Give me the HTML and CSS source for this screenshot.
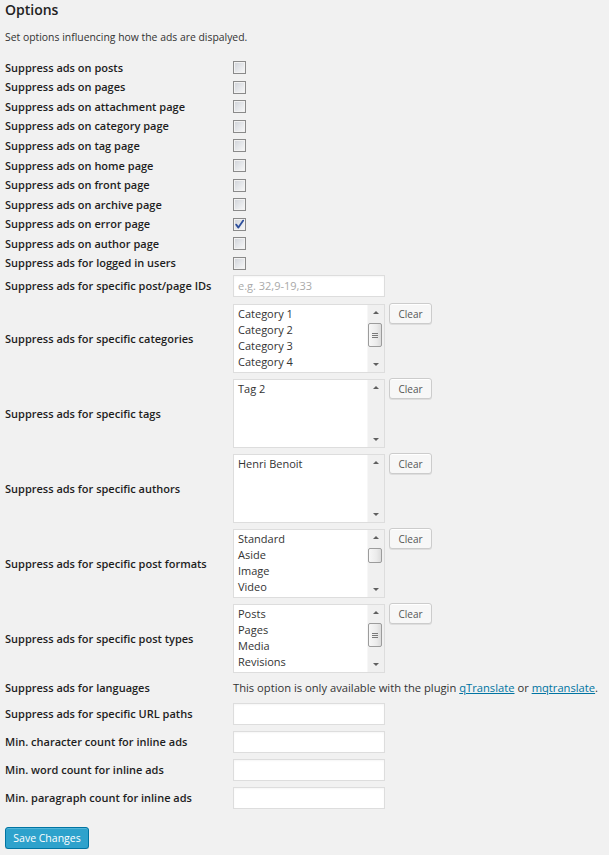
FILE: index.html
```html
<!DOCTYPE html>
<html>
<head>
<meta charset="utf-8">
<link rel="stylesheet" href="styles.css">
</head>
<body>
<div class="wrap">
  <h3 class="title">Options</h3>
  <p class="desc">Set options influencing how the ads are dispalyed.</p>

  <div class="form">
    <div class="row check"><div class="label">Suppress ads on posts</div><div class="field"><span class="cb"></span></div></div>
    <div class="row check"><div class="label">Suppress ads on pages</div><div class="field"><span class="cb"></span></div></div>
    <div class="row check"><div class="label">Suppress ads on attachment page</div><div class="field"><span class="cb"></span></div></div>
    <div class="row check"><div class="label">Suppress ads on category page</div><div class="field"><span class="cb"></span></div></div>
    <div class="row check"><div class="label">Suppress ads on tag page</div><div class="field"><span class="cb"></span></div></div>
    <div class="row check"><div class="label">Suppress ads on home page</div><div class="field"><span class="cb"></span></div></div>
    <div class="row check"><div class="label">Suppress ads on front page</div><div class="field"><span class="cb"></span></div></div>
    <div class="row check"><div class="label">Suppress ads on archive page</div><div class="field"><span class="cb"></span></div></div>
    <div class="row check"><div class="label">Suppress ads on error page</div><div class="field"><span class="cb checked"><svg viewBox="0 0 11 11" width="11" height="11"><path d="M2.2 5.6 L4.4 8.6 L9.2 1.6" fill="none" stroke="#2e4f9c" stroke-width="1.8" stroke-linecap="round" stroke-linejoin="round"/></svg></span></div></div>
    <div class="row check"><div class="label">Suppress ads on author page</div><div class="field"><span class="cb"></span></div></div>
    <div class="row check"><div class="label">Suppress ads for logged in users</div><div class="field"><span class="cb"></span></div></div>

    <div class="row text first-text"><div class="label">Suppress ads for specific post/page IDs</div><div class="field"><div class="input placeholder">e.g. 32,9-19,33</div></div></div>

    <div class="row list"><div class="label">Suppress ads for specific categories</div>
      <div class="field">
        <div class="listbox">
          <div class="opts"><div>Category 1</div><div>Category 2</div><div>Category 3</div><div>Category 4</div></div>
          <div class="sb"><span class="up"></span><span class="thumb grip thumb-a"><i></i><i></i><i></i></span><span class="down"></span></div>
        </div>
        <button class="btn">Clear</button>
      </div>
    </div>

    <div class="row list"><div class="label">Suppress ads for specific tags</div>
      <div class="field">
        <div class="listbox">
          <div class="opts"><div>Tag 2</div></div>
          <div class="sb"><span class="up"></span><span class="down"></span></div>
        </div>
        <button class="btn">Clear</button>
      </div>
    </div>

    <div class="row list"><div class="label">Suppress ads for specific authors</div>
      <div class="field">
        <div class="listbox">
          <div class="opts"><div>Henri Benoit</div></div>
          <div class="sb"><span class="up"></span><span class="down"></span></div>
        </div>
        <button class="btn">Clear</button>
      </div>
    </div>

    <div class="row list"><div class="label">Suppress ads for specific post formats</div>
      <div class="field">
        <div class="listbox">
          <div class="opts"><div>Standard</div><div>Aside</div><div>Image</div><div>Video</div></div>
          <div class="sb"><span class="up"></span><span class="thumb thumb-b"></span><span class="down"></span></div>
        </div>
        <button class="btn">Clear</button>
      </div>
    </div>

    <div class="row list"><div class="label">Suppress ads for specific post types</div>
      <div class="field">
        <div class="listbox">
          <div class="opts"><div>Posts</div><div>Pages</div><div>Media</div><div>Revisions</div></div>
          <div class="sb"><span class="up"></span><span class="thumb grip thumb-a"><i></i><i></i><i></i></span><span class="down"></span></div>
        </div>
        <button class="btn">Clear</button>
      </div>
    </div>

    <div class="row lang"><div class="label">Suppress ads for languages</div><div class="field note">This option is only available with the plugin <a href="#">qTranslate</a> or <a href="#">mqtranslate</a>.</div></div>

    <div class="row text url"><div class="label">Suppress ads for specific URL paths</div><div class="field"><div class="input"></div></div></div>
    <div class="row text"><div class="label">Min. character count for inline ads</div><div class="field"><div class="input"></div></div></div>
    <div class="row text"><div class="label">Min. word count for inline ads</div><div class="field"><div class="input"></div></div></div>
    <div class="row text"><div class="label">Min. paragraph count for inline ads</div><div class="field"><div class="input"></div></div></div>
  </div>

  <button class="primary">Save Changes</button>
</div>
</body>
</html>
```

FILE: styles.css
```css
html, body {
  margin: 0;
  padding: 0;
  background: #f1f1f1;
}
body {
  font-family: "Open Sans", "Liberation Sans", sans-serif;
  color: #222;
  font-size: 11px;
}
.wrap {
  padding: 0 5px;
}
.title {
  margin: 0;
  font-size: 14px;
  font-weight: 600;
  line-height: 20px;
  color: #222;
}
.desc {
  margin: 9px 0 0 0;
  font-size: 10.4px;
  line-height: 16px;
  color: #333;
}
.form {
  margin-top: 13px;
}
.row {
  display: grid;
  grid-template-columns: 228px 1fr;
  align-items: center;
}
.label {
  font-weight: 600;
  font-size: 11px;
  line-height: 16px;
  color: #1e1e1e;
}
.field {
  display: flex;
  align-items: flex-start;
}
.row.check {
  height: 19.55px;
}
.cb {
  box-sizing: border-box;
  width: 13px;
  height: 13px;
  border: 1px solid #8a8a8a;
  background: linear-gradient(135deg, #cfd2d8 0%, #e6e8eb 55%, #f8f8f8 100%);
  box-shadow: inset 0 0 0 1px #f2f2f2;
  display: flex;
  align-items: center;
  justify-content: center;
}
.cb svg {
  display: block;
}
.row.text {
  height: 28px;
}
.row.first-text {
  margin-top: -1px;
  height: 27px;
}
.input {
  box-sizing: border-box;
  width: 152px;
  height: 22px;
  border: 1px solid #dddddd;
  background: #fff;
  box-shadow: inset 0 1px 2px rgba(0,0,0,.04);
  font-size: 11px;
  line-height: 20px;
  padding: 0 4px;
}
.input.placeholder {
  color: #a9a9a9;
}
.row.list {
  height: 69px;
  margin-top: 6px;
}
.first-text + .row.list {
  margin-top: 5px;
}
.listbox {
  box-sizing: border-box;
  width: 152px;
  height: 69px;
  border: 1px solid #dddddd;
  background: #fff;
  display: flex;
}
.opts {
  flex: 1;
  padding: 1px 0 0 4px;
  font-size: 11px;
  line-height: 16px;
  color: #333;
}
.sb {
  width: 16px;
  background: #f0f0f0;
  border-left: 1px solid #f7f7f7;
  position: relative;
}
.sb .up, .sb .down {
  position: absolute;
  left: 5px;
  width: 0;
  height: 0;
  border-left: 3px solid transparent;
  border-right: 3px solid transparent;
}
.sb .up {
  top: 6px;
  border-bottom: 3px solid #606060;
}
.sb .down {
  bottom: 6px;
  border-top: 3px solid #606060;
}
.thumb {
  position: absolute;
  left: 0;
  width: 14px;
  box-sizing: border-box;
  border: 1px solid #9c9c9c;
  border-radius: 2px;
  background: linear-gradient(90deg, #f7f7f7 0%, #ececec 60%, #dcdcdc 100%);
  display: flex;
  flex-direction: column;
  align-items: center;
  justify-content: center;
  gap: 1px;
}
.thumb-a {
  top: 18px;
  height: 24px;
}
.thumb-b {
  top: 18px;
  height: 15px;
}
.thumb i {
  display: block;
  width: 6px;
  height: 1px;
  background: #7a7a7a;
}
.btn {
  margin: -1px 0 0 4px;
  box-sizing: border-box;
  width: 43px;
  height: 21px;
  padding: 0;
  font-family: "Open Sans", "Liberation Sans", sans-serif;
  font-size: 10px;
  color: #555;
  background: #f7f7f7;
  border: 1px solid #cccccc;
  border-radius: 3px;
  box-shadow: inset 0 1px 0 #fff, 0 1px 0 rgba(0,0,0,.08);
}
.row.lang {
  height: 25px;
  margin-top: 2px;
}
.note {
  font-size: 11.2px;
  color: #333;
  white-space: nowrap;
  display: block;
}
.note a {
  color: #0074a2;
  text-decoration: underline;
}
.primary {
  display: block;
  margin-top: 15px;
  box-sizing: border-box;
  width: 84px;
  height: 22px;
  padding: 0;
  font-family: "Open Sans", "Liberation Sans", sans-serif;
  font-size: 10.5px;
  color: #fff;
  background: #2ea2cc;
  border: 1px solid #0074a2;
  border-radius: 3px;
  box-shadow: inset 0 1px 0 rgba(120,200,230,.5), 0 1px 0 rgba(0,0,0,.15);
}
```
